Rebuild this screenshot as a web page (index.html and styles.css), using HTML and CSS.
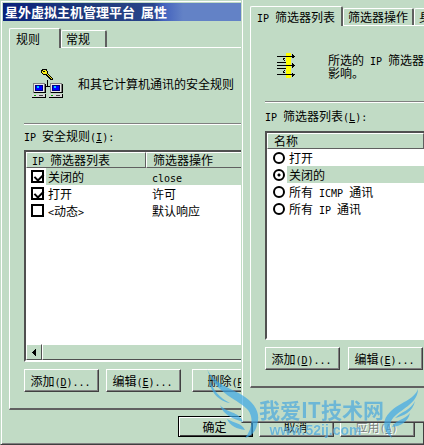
FILE: index.html
```
<!DOCTYPE html>
<html lang="zh-CN">
<head>
<meta charset="UTF-8">
<meta name="viewport" content="width=device-width, initial-scale=1.0">
<title>星外虚拟主机管理平台 属性</title>
<link rel="stylesheet" href="styles.css">
</head>
<body>
<div class="desktop">

  <div class="window main">
    <h1 class="title">星外虚拟主机管理平台<span class="en"> </span>属性</h1>
    <div class="tabs" role="tablist">
      <button class="tab active" role="tab">规则</button>
      <button class="tab second" role="tab">常规</button>
    </div>
    <div class="panel">
      <div class="intro">
        <svg class="pc-icon" width="32" height="30" viewBox="0 0 32 30" shape-rendering="crispEdges">
          <path d="M15 11h1v6h2v1h-5v-1h2z" fill="#000"/>
          <path d="M10 0h4l1 1v1h1v3h1v1h1v1h1v1h1v1h1v2h-3v-1h-1v-1h-1v-1h-1v-1h-1v-1h-3l-2-2v-3z" fill="#000"/>
          <path d="M10 1h4v1h1v3h1v1h1v1h1v1h1v1h1v1h-1v-1h-1v-1h-1v-1h-1v-1h-1v-1h-4v-1h-1v-2h1z" fill="#f7ee18"/>
          <path d="M11 2h2v1h-2z" fill="#000"/>
          <g id="pc">
            <path d="M1 14h12v10h-12z" fill="#808080"/>
            <path d="M2 15h10v8h-10z" fill="#e8e8e8"/>
            <path d="M3 16h8v6h-8z" fill="#000080"/>
            <path d="M4 17h6v4h-6z" fill="#00f"/>
            <path d="M5 17h2v2h-2z" fill="#0cf"/>
            <path d="M13 15h1v9h-12v-1h11z" fill="#000"/>
            <path d="M0 25h13v3h-13z" fill="#d8d8d8"/>
            <path d="M0 28h13v-3h1v4h-14z" fill="#000"/>
            <path d="M2 26h2v1h-2z" fill="#0a0"/>
            <path d="M7 26h4v1h-4z" fill="#444"/>
          </g>
          <use href="#pc" x="17"/>
        </svg>
        <p>和其它计算机通讯的安全规则</p>
      </div>
      <p class="list-label" id="rules-label"><span class="en">IP </span>安全规则<span class="en">(<u>I</u>):</span></p>
      <div class="list">
        <table aria-labelledby="rules-label">
          <thead>
            <tr><th class="col-name"><span class="en">IP </span>筛选器列表</th><th>筛选器操作</th></tr>
          </thead>
          <tbody>
            <tr class="selected">
              <td><label><input type="checkbox" checked><span>关闭的</span></label></td>
              <td><span class="en">close</span></td>
            </tr>
            <tr>
              <td><label><input type="checkbox" checked><span>打开</span></label></td>
              <td>许可</td>
            </tr>
            <tr>
              <td><label><input type="checkbox"><span><span class="en">&lt;</span>动态<span class="en">&gt;</span></span></label></td>
              <td>默认响应</td>
            </tr>
          </tbody>
        </table>
        <div class="scrollbar">
          <button class="arrow" aria-label="向左滚动"><svg width="4" height="7" viewBox="0 0 4 7" shape-rendering="crispEdges"><path d="M4 0v7L0 3.5z"/></svg></button>
          <div class="thumb"></div>
        </div>
      </div>
      <div class="actions">
        <button class="btn">添加<span class="en">(<u>D</u>)...</span></button>
        <button class="btn">编辑<span class="en">(<u>E</u>)...</span></button>
        <button class="btn delete">删除<span class="en">(<u>R</u>)</span></button>
      </div>
    </div>
    <div class="footer">
      <button class="btn default">确定</button>
      <button class="btn">取消</button>
      <button class="btn" disabled>应用<span class="en">(<u>A</u>)</span></button>
    </div>
  </div>

  <div class="window filter">
    <div class="tabs" role="tablist">
      <button class="tab active" role="tab"><span class="en">IP </span>筛选器列表</button>
      <button class="tab" role="tab">筛选器操作</button>
      <button class="tab" role="tab">身份验证方法</button>
    </div>
    <div class="panel">
      <div class="intro">
        <svg class="filter-icon" width="20" height="28" viewBox="0 0 20 28" shape-rendering="crispEdges">
          <path d="M10 0h5v27h-5z" fill="#ff0"/>
          <path d="M0 3h17v1h-17zM0 13h17v1h-17zM0 23h17v1h-17zM0 10h10v1h-10zM0 16h10v1h-10z"/>
          <path d="M16 1h1v1h1v1h1v1h-1v1h-1v1h-1zM16 11h1v1h1v1h1v1h-1v1h-1v1h-1zM16 21h1v1h1v1h1v1h-1v1h-1v1h-1z"/>
          <path d="M6 6h3v1h-2v1h1v1h1v1h-1v-1h-1v-1h-1zM6 21h3v-1h-2v-1h1v-1h1v-1h-1v1h-1v1h-1z"/>
        </svg>
        <p>所选的<span class="en"> IP </span>筛选器<br>影响。</p>
      </div>
      <p class="list-label" id="filters-label"><span class="en">IP </span>筛选器列表<span class="en">(<u>L</u>):</span></p>
      <div class="list">
        <table aria-labelledby="filters-label">
          <thead>
            <tr><th>名称</th></tr>
          </thead>
          <tbody>
            <tr><td><label><input type="radio" name="filter"><span>打开</span></label></td></tr>
            <tr class="selected"><td><label><input type="radio" name="filter" checked><span>关闭的</span></label></td></tr>
            <tr><td><label><input type="radio" name="filter"><span>所有<span class="en"> ICMP </span>通讯</span></label></td></tr>
            <tr><td><label><input type="radio" name="filter"><span>所有<span class="en"> IP </span>通讯</span></label></td></tr>
          </tbody>
        </table>
      </div>
      <div class="actions">
        <button class="btn">添加<span class="en">(<u>D</u>)...</span></button>
        <button class="btn">编辑<span class="en">(<u>E</u>)...</span></button>
      </div>
    </div>
  </div>

  <div class="watermark">
    <svg class="wing" width="52" height="70" viewBox="0 0 52 70">
      <path d="M0 0C7 15 22 18 35 26C48 34 54 44 50 56C48 64 44 67 38 69C45 60 47 49 41 41C33 31 8 25 0 0z"/>
      <path d="M2 8C5 21 13 29 23 34C14 33 2 24 2 8z"/>
      <path d="M13 36C19 44 32 42 36 53C27 50 16 46 13 36z"/>
      <path d="M20 50C27 54 35 54 38 61C30 60 23 57 20 50z"/>
    </svg>
    <div class="brand">
      <p class="name">我爱IT技术网</p>
      <p class="site">www.52ij.com</p>
    </div>
    <svg class="wing" width="34" height="50" viewBox="0 0 34 50">
      <path d="M34 0C30 11 16 13 6 23C-3 32 -1 42 8 49C4 39 5 32 12 26C22 18 34 12 34 0z"/>
      <path d="M31 12C27 21 17 23 11 29C19 27 29 23 31 12z"/>
      <path d="M26 24C21 31 12 30 8 38C17 37 24 33 26 24z"/>
    </svg>
  </div>

</div>
</body>
</html>
```
FILE: styles.css
```
* {
  box-sizing: border-box;
}
body {
  margin: 0;
  background: #c1dbc5;
  color: #000;
  font: 12px/16px "Noto Sans CJK SC", sans-serif;
}
h1,
p {
  margin: 0;
}
button {
  font: inherit;
  color: inherit;
  background: #c1dbc5;
  white-space: nowrap;
}
.en {
  font-family: "DejaVu Sans Mono", monospace;
  font-size: 10px;
  line-height: 10px;
  white-space: pre;
}
.desktop {
  position: relative;
  overflow: hidden;
}

/* windows */
.window {
  background: #c1dbc5;
  border: 1px solid #c1dbc5;
  border-bottom-color: #404040;
  box-shadow: inset 1px 1px #fff, inset 0 -1px #808080;
  padding: 2px;
}
.main {
  border-right-color: #404040;
}
.filter {
  position: absolute;
  top: 0;
  left: 241px;
  right: 0;
  border-top: 0;
  border-right: 0;
  padding: 6px 0 34px 8px;
  box-shadow: inset 1px 0 #fff, inset 0 -1px #808080;
  overflow: hidden;
}
.title {
  height: 18px;
  padding-left: 2px;
  background: linear-gradient(90deg, #08217b, #213c7b 90px, #29458c 150px, #4261bd 160px, #6382c6 180px);
  color: #fff;
  font-size: 13px;
  line-height: 18px;
}

/* tabs */
.tabs {
  display: flex;
  align-items: flex-end;
  height: 19px;
}
.tab {
  flex: none;
  height: 17px;
  padding: 0 4px;
  border: 1px solid #fff;
  border-right: 2px solid #606060;
  border-bottom: 0;
  border-radius: 2px 2px 0 0;
  line-height: 16px;
}
.tab.active {
  position: relative;
  height: 20px;
  margin-bottom: -1px;
  padding: 0 6px;
}
.main .tabs {
  margin: 7px 0 0 6px;
}
.main .tab.active {
  width: 52px;
  text-align: left;
}
.main .tab.second {
  width: 46px;
  text-align: left;
}

/* tab content */
.panel {
  padding: 0 14px 16px;
  border: 1px solid #fff;
  border-bottom: 2px solid #606060;
}
.main .panel {
  margin: 0 6px;
}
.filter .panel {
  border-right: 0;
  padding-right: 0;
}
.intro {
  display: flex;
  align-items: center;
  height: 77px;
  padding: 0 0 5px 8px;
  border-bottom: 1px solid #fff;
  box-shadow: inset 0 -1px #808080;
  gap: 14px;
  white-space: nowrap;
}
.filter .intro {
  padding: 4px 0 0 12px;
  gap: 32px;
  line-height: 12px;
}
.list-label {
  height: 25px;
  padding-top: 3px;
}
.filter .list-label {
  height: 28px;
  padding-top: 5px;
}

/* lists */
.list {
  display: flex;
  flex-direction: column;
  justify-content: space-between;
  height: 212px;
  background: #fff;
  border: 2px solid #505050;
  border-color: #505050 #fff #fff #505050;
}
.filter .list {
  height: 209px;
  border-right: 0;
}
table {
  width: 100%;
  border-collapse: separate;
  border-spacing: 0;
  table-layout: fixed;
}
th,
td {
  height: 17px;
  padding: 0 0 0 6px;
  line-height: 16px;
  font-weight: normal;
  text-align: left;
  white-space: nowrap;
}
th {
  height: 16px;
  line-height: 14px;
  background: #c1dbc5;
  border: 1px solid #fff;
  border-right-color: #606060;
  border-bottom-color: #606060;
}
.col-name {
  width: 120px;
  padding-left: 5px;
}
td:first-child {
  padding-left: 5px;
}
.selected {
  background: linear-gradient(90deg, #fff 20px, #c1dbc5 20px);
}
.selected td + td {
  background: #c1dbc5;
}
td label {
  display: flex;
  align-items: center;
  gap: 4px;
}
input {
  flex: none;
  appearance: none;
  width: 13px;
  height: 13px;
  margin: 0;
  border: 2px solid #000;
  background: #fff;
}
input[type="checkbox"]:checked::before {
  content: "";
  display: block;
  width: 4px;
  height: 7px;
  margin: 0 0 0 3px;
  border: solid #000;
  border-width: 0 2px 2px 0;
  transform: rotate(45deg);
}
input[type="radio"] {
  width: 12px;
  height: 12px;
  border-radius: 50%;
}
input[type="radio"]:checked {
  background: radial-gradient(circle, #000 1px, #fff 2px);
}
.filter td:first-child {
  padding-left: 6px;
}

/* scrollbar */
.scrollbar {
  display: flex;
  height: 16px;
}
.arrow,
.thumb {
  border: 1px solid #fff;
  border-right-color: #505050;
  border-bottom-color: #505050;
  background: #c1dbc5;
}
.arrow {
  display: flex;
  align-items: center;
  justify-content: center;
  width: 16px;
  padding: 0;
}
.thumb {
  flex: 1;
}

/* buttons */
.actions {
  display: flex;
  gap: 7px;
  padding-top: 7px;
}
.filter .actions {
  gap: 8px;
}
.btn {
  flex: none;
  width: 75px;
  height: 23px;
  padding: 0 2px 0 0;
  border: 1px solid #fff;
  border-right-color: #404040;
  border-bottom-color: #404040;
  box-shadow: inset -1px -1px #808080;
  line-height: 20px;
}
.btn.default {
  border-color: #000;
  box-shadow: inset 1px 1px #fff, inset -1px -1px #404040;
}
.btn:disabled {
  color: #808080;
  text-shadow: 1px 1px #fff;
}
.delete {
  margin-left: 4px;
}
.footer {
  display: flex;
  justify-content: flex-end;
  gap: 6px;
  padding: 6px 6px 5px 0;
}
.footer .btn {
  height: 21px;
  line-height: 18px;
}

/* watermark over both windows */
.watermark {
  position: absolute;
  right: 6px;
  bottom: 6px;
  display: flex;
  align-items: flex-end;
  color: #4aa8de;
  opacity: 0.7;
  pointer-events: none;
}
.wing {
  fill: #3fa9e6;
}
.brand {
  text-align: center;
  white-space: nowrap;
}
.name {
  font-size: 21px;
  font-weight: bold;
  line-height: 24px;
}
.site {
  padding-right: 12px;
  font: bold 14px/18px "Liberation Sans", Arial, sans-serif;
  text-shadow: 0 0 1px #fff;
}
```
